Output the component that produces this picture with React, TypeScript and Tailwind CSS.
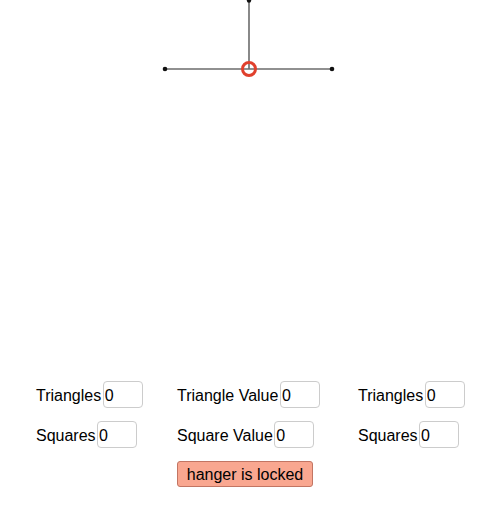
import React from "react";

function Field({ label }: { label: string }) {
  return (
    <div className="flex items-center">
      <span className="pt-[3px] leading-normal">{label}</span>
      <input
        readOnly
        value="0"
        className="ml-[1.5px] h-[27px] w-[40px] rounded-[4px] border border-[#cccccc] bg-white pl-[1px] pt-[3px] text-[16px] text-black outline-none"
        style={{ fontFamily: '"Liberation Sans", Arial, sans-serif' }}
      />
    </div>
  );
}

export default function App() {
  return (
    <div
      className="w-[500px] h-[510px] bg-white text-black text-[16px]"
      style={{ fontFamily: '"Liberation Sans", Arial, sans-serif' }}
    >
      <div className="h-[381px]">
        <svg width="500" height="100" viewBox="0 0 500 100">
          <line x1="249" y1="0" x2="249" y2="69" stroke="#6b6b6b" strokeWidth="1.6" />
          <line x1="165" y1="69" x2="332" y2="69" stroke="#6b6b6b" strokeWidth="1.6" />
          <circle cx="249" cy="0.5" r="2.2" fill="#111" />
          <circle cx="165" cy="69" r="2.3" fill="#111" />
          <circle cx="332" cy="69" r="2.3" fill="#111" />
          <circle cx="249" cy="69" r="6.5" fill="none" stroke="#e0402d" strokeWidth="3" />
        </svg>
      </div>
      <div className="flex pl-[36px]">
        <div className="flex w-[141px] flex-col gap-[13px]">
          <Field label="Triangles" />
          <Field label="Squares" />
        </div>
        <div className="flex w-[181px] flex-col gap-[13px]">
          <Field label="Triangle Value" />
          <Field label="Square Value" />
          <button className="h-[26px] w-[136px] rounded-[3px] border border-[#c27563] bg-[#f9a790] pt-[1px] text-[16px] leading-none text-black">
            hanger is locked
          </button>
        </div>
        <div className="flex flex-col gap-[13px]">
          <Field label="Triangles" />
          <Field label="Squares" />
        </div>
      </div>
    </div>
  );
}
